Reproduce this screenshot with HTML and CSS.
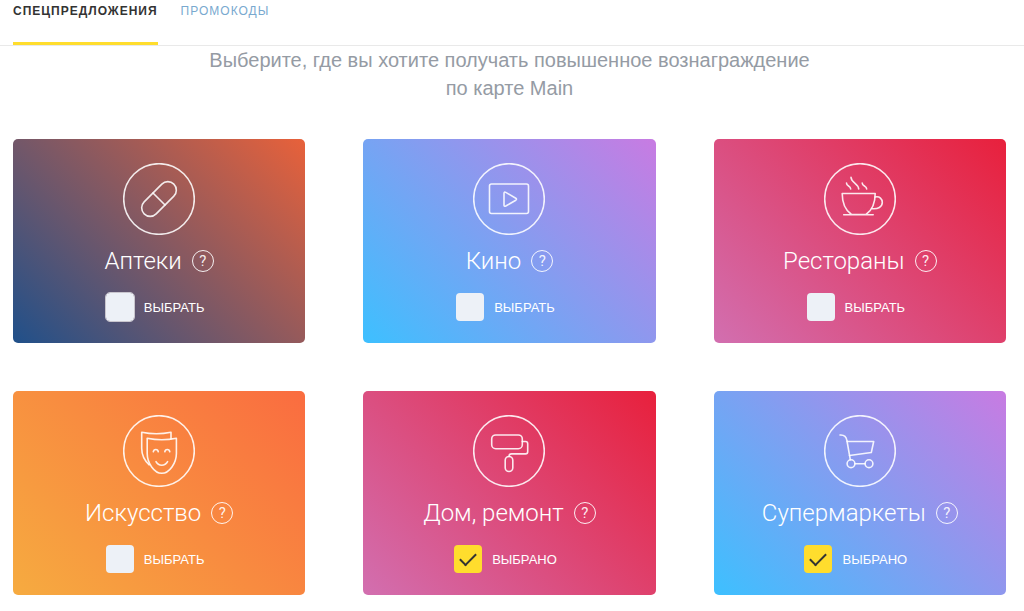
FILE: index.html
```html
<!DOCTYPE html>
<html lang="ru">
<head>
    <meta charset="UTF-8">
    <meta name="viewport" content="width=device-width, initial-scale=1.0">
    <title>Спецпредложения</title>
    <link rel="stylesheet" href="styles.css">
</head>
<body>
    <!-- Tabs -->
    <nav class="tabs">
        <a href="#" class="tab active">СПЕЦПРЕДЛОЖЕНИЯ</a>
        <a href="#" class="tab">ПРОМОКОДЫ</a>
    </nav>

    <main class="container">
        <p class="subtitle">Выберите, где вы хотите получать повышенное вознаграждение по&nbsp;карте&nbsp;Main</p>

        <!-- Categories -->
        <div class="cards">
            <section class="card card-pharmacy">
                <svg class="icon" viewBox="0 0 72 72" aria-hidden="true">
                    <circle cx="36" cy="36" r="35.3"/>
                    <g transform="rotate(-45 36 36)">
                        <rect x="15" y="27.5" width="42" height="17" rx="8.5"/>
                        <path d="M36 27.5v17"/>
                    </g>
                </svg>
                <div class="card-title">
                    <h2>Аптеки</h2>
                    <button type="button" class="help" aria-label="Подробнее">?</button>
                </div>
                <label class="choice">
                    <input type="checkbox" class="current">
                    <span>ВЫБРАТЬ</span>
                </label>
            </section>

            <section class="card card-blue">
                <svg class="icon" viewBox="0 0 72 72" aria-hidden="true">
                    <circle cx="36" cy="36" r="35.3"/>
                    <rect x="16.5" y="21" width="39" height="29.5" rx="2"/>
                    <path d="M31 30.5q0-2 1.8-1.1l10 5.8q1.4 1 0 2l-10 5.8q-1.8.9-1.8-1.1z"/>
                </svg>
                <div class="card-title">
                    <h2>Кино</h2>
                    <button type="button" class="help" aria-label="Подробнее">?</button>
                </div>
                <label class="choice">
                    <input type="checkbox">
                    <span>ВЫБРАТЬ</span>
                </label>
            </section>

            <section class="card card-red">
                <svg class="icon" viewBox="0 0 72 72" aria-hidden="true">
                    <circle cx="36" cy="36" r="35.3"/>
                    <path d="M18.2 30.5h33c0 9-2.7 16.5-9.2 21H27.5c-6.5-4.5-9.3-12-9.3-21zM19.7 51.700h29.500"/>
                    <path d="M51.2 34c4.500-1 7.200 2 7.100 5.500-.1 4.500-4.300 6.800-10.300 6.200"/>
                    <path d="M22.5 20c0 3.500 4 2.500 4.200 6M27 14.300c0 5.500 7.500 6 7.700 11.700M38.200 20c0 3.500 4.300 2.500 4.500 6"/>
                </svg>
                <div class="card-title">
                    <h2>Рестораны</h2>
                    <button type="button" class="help" aria-label="Подробнее">?</button>
                </div>
                <label class="choice">
                    <input type="checkbox">
                    <span>ВЫБРАТЬ</span>
                </label>
            </section>

            <section class="card card-orange">
                <svg class="icon" viewBox="0 0 72 72" aria-hidden="true">
                    <circle cx="36" cy="36" r="35.3"/>
                    <path d="M48 23.800v-6.500q-14.700 3-29.300 0v16c0 7 3 12.500 7.500 16.500"/>
                    <path d="M24.200 23.300q14.600 3 29.200 0v15.200c0 9.500-7 19.800-14.600 19.800s-14.600-10.300-14.600-19.800z"/>
                    <path d="M30.300 36.800c.4-3 4.600-3 5 0M41.800 36.800c.4-3 4.600-3 5 0M33 46.700c2.500 4.700 9 4.700 11.600 0"/>
                </svg>
                <div class="card-title">
                    <h2>Искусство</h2>
                    <button type="button" class="help" aria-label="Подробнее">?</button>
                </div>
                <label class="choice">
                    <input type="checkbox">
                    <span>ВЫБРАТЬ</span>
                </label>
            </section>

            <section class="card card-red">
                <svg class="icon" viewBox="0 0 72 72" aria-hidden="true">
                    <circle cx="36" cy="36" r="35.3"/>
                    <rect x="18.7" y="20" width="30.6" height="13.7" rx="4"/>
                    <path d="M49.300 26.500h3.200q2.200 0 2.200 2.200v8q0 2.200-2.200 2.200H38.500q-2.500 0-2.500 2.600"/>
                    <rect x="32.2" y="41.5" width="7.6" height="15" rx="3.8"/>
                </svg>
                <div class="card-title">
                    <h2>Дом, ремонт</h2>
                    <button type="button" class="help" aria-label="Подробнее">?</button>
                </div>
                <label class="choice">
                    <input type="checkbox" checked>
                    <span>ВЫБРАНО</span>
                </label>
            </section>

            <section class="card card-blue">
                <svg class="icon" viewBox="0 0 72 72" aria-hidden="true">
                    <circle cx="36" cy="36" r="35.3"/>
                    <path d="M16 20c4-.3 6.300 1.500 6.900 5.500l3.400 19.200"/>
                    <path d="M23.200 26.500h26.500l-2.400 11-21.800 3"/>
                    <circle cx="27" cy="48.7" r="3.9"/>
                    <circle cx="45" cy="48.7" r="3.9"/>
                    <path d="M31 48.700h10"/>
                </svg>
                <div class="card-title">
                    <h2>Супермаркеты</h2>
                    <button type="button" class="help" aria-label="Подробнее">?</button>
                </div>
                <label class="choice">
                    <input type="checkbox" checked>
                    <span>ВЫБРАНО</span>
                </label>
            </section>
        </div>
    </main>
</body>
</html>
```
FILE: styles.css
```css
/* Basic Reset */
body, h2, p, button, input {
    margin: 0;
    padding: 0;
    box-sizing: border-box;
}

body {
    font-family: "Liberation Sans", Arial, sans-serif;
    background-color: #fff;
    color: #333;
}

/* Tabs */
.tabs {
    display: flex;
    gap: 23px;
    padding: 0 13px;
    border-bottom: 1px solid #e9e9e9;
}

.tab {
    padding: 2px 0 22px;
    border-bottom: 3px solid transparent;
    font-size: 12px;
    line-height: 18px;
    letter-spacing: 1px;
    color: #79a9cf;
    text-decoration: none;
}

.tab.active {
    border-bottom-color: #ffdd2d;
    font-weight: bold;
    color: #333;
}

/* Main Content */
.container {
    padding: 0 18px 16px 13px;
}

.subtitle {
    max-width: 640px;
    margin: 0 auto 37px;
    font-size: 20px;
    line-height: 28px;
    text-align: center;
    color: #959ba4;
}

/* Cards */
.cards {
    display: grid;
    grid-template-columns: repeat(3, 1fr);
    gap: 48px 58px;
}

.card {
    display: flex;
    flex-direction: column;
    align-items: center;
    padding: 24px 0 22px;
    border-radius: 5px;
    color: #fff;
}

.card-pharmacy {
    background: linear-gradient(45deg, #20508a, #e8613a);
}

.card-blue {
    background: linear-gradient(45deg, #3dc0ff, #c87be2);
}

.card-red {
    background: linear-gradient(45deg, #d26fb0, #e8203c);
}

.card-orange {
    background: linear-gradient(45deg, #f6ab40, #fa6c40);
}

.icon {
    width: 72px;
    height: 72px;
    fill: none;
    stroke: rgba(255, 255, 255, 0.88);
    stroke-width: 1.6;
    stroke-linecap: round;
    stroke-linejoin: round;
}

.card-title {
    display: flex;
    align-items: center;
    gap: 10px;
    margin: 8px 0 14px;
}

.card-title h2 {
    font-family: Roboto, sans-serif;
    font-size: 24px;
    font-weight: 300;
    line-height: 36px;
}

.help {
    width: 22px;
    height: 22px;
    border: 1px solid rgba(255, 255, 255, 0.9);
    border-radius: 50%;
    background: none;
    font-family: Roboto, sans-serif;
    font-size: 15px;
    line-height: 20px;
    color: rgba(255, 255, 255, 0.9);
    cursor: pointer;
}

/* Checkbox */
.choice {
    display: flex;
    align-items: center;
    gap: 10px;
    padding-right: 8px;
    font-size: 13px;
    cursor: pointer;
}

.choice input {
    display: grid;
    place-items: center;
    width: 28px;
    height: 28px;
    border-radius: 4px;
    background-color: #edf1f7;
    appearance: none;
    cursor: pointer;
}

.choice input.current {
    outline: 1px solid #c9c6ce;
}

.choice input:checked {
    background-color: #ffdd2d;
}

/* Tick mark */
.choice input:checked::after {
    content: "";
    width: 14px;
    height: 7px;
    margin-bottom: 4px;
    border: solid #333;
    border-width: 0 0 2px 2px;
    transform: rotate(-45deg);
}
```
